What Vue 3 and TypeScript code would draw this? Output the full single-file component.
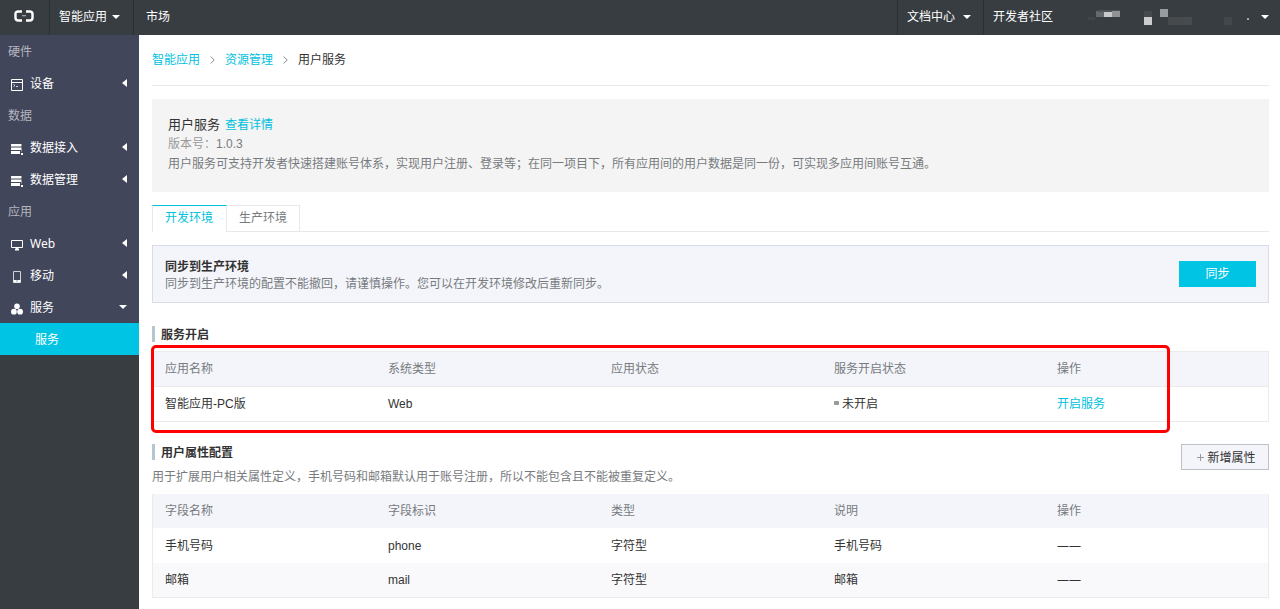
<script setup lang="ts">
interface NavRow {
  kind: 'group' | 'item'
  label: string
  icon?: 'device' | 'data' | 'web' | 'mobile' | 'service'
  open?: boolean
}

const nav: NavRow[] = [
  { kind: 'group', label: '硬件' },
  { kind: 'item', label: '设备', icon: 'device' },
  { kind: 'group', label: '数据' },
  { kind: 'item', label: '数据接入', icon: 'data' },
  { kind: 'item', label: '数据管理', icon: 'data' },
  { kind: 'group', label: '应用' },
  { kind: 'item', label: 'Web', icon: 'web' },
  { kind: 'item', label: '移动', icon: 'mobile' },
  { kind: 'item', label: '服务', icon: 'service', open: true },
]

const serviceHeads: string[] = ['应用名称', '系统类型', '应用状态', '服务开启状态', '操作']
const fieldHeads: string[] = ['字段名称', '字段标识', '类型', '说明', '操作']
const fields: string[][] = [
  ['手机号码', 'phone', '字符型', '手机号码', '——'],
  ['邮箱', 'mail', '字符型', '邮箱', '——'],
]
</script>

<template>
  <div class="app">
    <header class="topbar">
      <a href="#" class="logo" aria-label="Home">
        <svg width="20" height="12" viewBox="0 0 20 12" fill="none">
          <path d="M8 1.5H4.5Q1.5 1.5 1.5 4v4Q1.5 10.5 4.5 10.5H8M12 1.5h3.5Q18.5 1.5 18.5 4v4Q18.5 10.5 15.5 10.5H12" stroke="#fff" stroke-width="2.4" />
          <path d="M8 5.7h4" stroke="#a9acae" stroke-width="1.2" />
        </svg>
      </a>
      <button type="button" class="top-item apps">智能应用<span class="caret" /></button>
      <a href="#" class="top-item market">市场</a>
      <div class="spacer" />
      <button type="button" class="top-item docs">文档中心<span class="caret" /></button>
      <a href="#" class="top-item community">开发者社区</a>
      <button type="button" class="account" aria-label="Account">
        <svg width="168" height="35" viewBox="0 0 168 35" shape-rendering="crispEdges">
          <rect x="0" y="17" width="7" height="3" fill="#3f4548" />
          <rect x="8" y="11" width="8" height="6" fill="#65696c" />
          <rect x="10" y="10" width="22" height="2" fill="#4f5457" />
          <rect x="16" y="12" width="8" height="5" fill="#c8caca" />
          <rect x="24" y="11" width="8" height="6" fill="#909395" />
          <rect x="56" y="11" width="8" height="6" fill="#444a4d" />
          <rect x="56" y="17" width="8" height="8" fill="#cccdce" />
          <rect x="72" y="9" width="8" height="8" fill="#999c9e" />
          <rect x="80" y="17" width="16" height="8" fill="#464a4d" />
          <rect x="96" y="17" width="8" height="8" fill="#484c4f" />
          <rect x="136" y="17" width="8" height="8" fill="#43484b" />
          <rect x="159" y="18" width="2" height="2" fill="#a4a7a8" />
        </svg>
        <span class="caret" />
      </button>
    </header>

    <div class="body">
      <aside class="sidebar">
        <nav class="nav">
          <template v-for="row in nav" :key="row.label">
            <div v-if="row.kind === 'group'" class="nav-group">{{ row.label }}</div>
            <button v-else type="button" class="nav-item">
              <svg v-if="row.icon === 'device'" class="icon" viewBox="0 0 12 12" fill="none" stroke="#fff">
                <path d="M.5.5h11v11H.5zM.5 3.5h11" />
                <path d="M2.5 5.5l1.5 1-1.500 1M5 7.500h2" stroke="#d4d5da" />
              </svg>
              <svg v-else-if="row.icon === 'data'" class="icon" viewBox="0 0 12 12" fill="#fff">
                <path d="M0 1h10v2.500H0zM0 4.500h10v2.500H0zM0 8h9v3H0z" />
                <path d="M10 1h1v2.500h-1zM10 4.500h1v4h-1z" fill="#9a9ca8" />
                <path d="M10 10h2v2h-2z" />
              </svg>
              <svg v-else-if="row.icon === 'web'" class="icon" viewBox="0 0 12 12" fill="none" stroke="#fff">
                <path d="M.5 1.500h11v7H.5z" />
                <path d="M6 9v1.500M4 10.500h4" stroke-width="2" />
              </svg>
              <svg v-else-if="row.icon === 'mobile'" class="icon" viewBox="0 0 12 12">
                <path d="M2.500.5h7v11h-7z" fill="none" stroke="#d0d1d6" />
                <path d="M2.500 9h7v2.500h-7z" fill="#fff" />
                <path d="M5.500 9.500h1v1h-1z" fill="#42465a" />
              </svg>
              <svg v-else class="icon" viewBox="0 0 12 12" fill="#fff">
                <circle cx="6" cy="3.300" r="2.800" />
                <circle cx="2.900" cy="8.700" r="2.900" />
                <circle cx="9.100" cy="8.700" r="2.900" />
              </svg>
              <span class="nav-label">{{ row.label }}</span>
              <span :class="row.open ? 'caret' : 'caret-left'" />
            </button>
          </template>
          <a href="#" class="nav-sub">服务</a>
        </nav>
      </aside>

      <main class="main">
        <nav class="crumbs">
          <a href="#">智能应用</a>
          <svg width="5" height="8" viewBox="0 0 5 8"><path d="M.7.500L4.200 4 .7 7.500" fill="none" stroke="#888" /></svg>
          <a href="#">资源管理</a>
          <svg width="5" height="8" viewBox="0 0 5 8"><path d="M.7.500L4.200 4 .7 7.500" fill="none" stroke="#888" /></svg>
          <span>用户服务</span>
        </nav>

        <section class="intro">
          <div class="intro-title"><h1>用户服务</h1><a href="#">查看详情</a></div>
          <p><span class="muted">版本号：</span>1.0.3</p>
          <p>用户服务可支持开发者快速搭建账号体系，实现用户注册、登录等；在同一项目下，所有应用间的用户数据是同一份，可实现多应用间账号互通。</p>
        </section>

        <div class="tabs" role="tablist">
          <button type="button" role="tab" class="tab active" aria-selected="true">开发环境</button>
          <button type="button" role="tab" class="tab" aria-selected="false">生产环境</button>
        </div>

        <section class="sync">
          <div class="sync-text">
            <h2>同步到生产环境</h2>
            <p>同步到生产环境的配置不能撤回，请谨慎操作。您可以在开发环境修改后重新同步。</p>
          </div>
          <button type="button" class="primary">同步</button>
        </section>

        <section class="services">
          <h2 class="heading">服务开启</h2>
          <div class="marked">
            <table class="grid lined">
              <thead>
                <tr><th v-for="h in serviceHeads" :key="h" scope="col">{{ h }}</th></tr>
              </thead>
              <tbody>
                <tr>
                  <td>智能应用-PC版</td>
                  <td>Web</td>
                  <td></td>
                  <td><span class="dot" />未开启</td>
                  <td><a href="#">开启服务</a></td>
                </tr>
              </tbody>
            </table>
            <div class="highlight" />
          </div>
        </section>

        <section class="attributes">
          <div class="attr-head">
            <div>
              <h2 class="heading">用户属性配置</h2>
              <p>用于扩展用户相关属性定义，手机号码和邮箱默认用于账号注册，所以不能包含且不能被重复定义。</p>
            </div>
            <button type="button" class="add">
              <svg width="7" height="7" viewBox="0 0 7 7"><path d="M3.500 0v7M0 3.500h7" stroke="#999" /></svg>新增属性
            </button>
          </div>
          <table class="grid striped">
            <thead>
              <tr><th v-for="h in fieldHeads" :key="h" scope="col">{{ h }}</th></tr>
            </thead>
            <tbody>
              <tr v-for="row in fields" :key="row[1]">
                <td v-for="(cell, i) in row" :key="i" :class="{ none: i === 4 }">{{ cell }}</td>
              </tr>
            </tbody>
          </table>
        </section>
      </main>
    </div>
  </div>
</template>

<style>
body {
  background: #fff;
}
</style>

<style scoped>
.app {
  display: flex;
  flex-direction: column;
  min-height: 100vh;
  font: 12px/18px "Liberation Sans", "Noto Sans CJK SC", sans-serif;
  color: #333;
}
.app *,
.app {
  box-sizing: border-box;
}
h1, h2, p {
  margin: 0;
}
a {
  color: #00c1de;
  text-decoration: none;
}
button {
  font: inherit;
  border: 0;
  border-radius: 0;
  padding: 0;
  margin: 0;
  background: none;
  cursor: pointer;
}
.caret {
  border: 4px solid transparent;
  border-top-color: #fff;
  border-bottom: 0;
}
.caret-left {
  border: 4px solid transparent;
  border-right: 5px solid #fff;
  border-left: 0;
}

.topbar {
  display: flex;
  height: 35px;
  background: #373d41;
}
.logo {
  display: flex;
  align-items: center;
  width: 50px;
  padding: 0 0 3px 14px;
  border-right: 1px solid #2a2f32;
}
.top-item {
  display: flex;
  align-items: center;
  padding: 0 13px 2px 9px;
  color: #fff;
}
.apps {
  gap: 5px;
  border-right: 1px solid #2a2f32;
}
.market {
  padding-left: 12px;
}
.spacer {
  flex: 1;
}
.docs {
  gap: 8px;
  padding-right: 12px;
  border-left: 1px solid #2a2f32;
  border-right: 1px solid #2a2f32;
}
.community {
  padding-right: 35px;
}
.account {
  display: flex;
  align-items: center;
  gap: 5px;
  padding-right: 11px;
}
.account .caret {
  margin-bottom: 2px;
}

.body {
  display: flex;
  flex: 1;
}
.sidebar {
  flex: 0 0 139px;
  background: #373d41;
}
.nav {
  display: flex;
  flex-direction: column;
  background: #42465a;
}
.nav-group,
.nav-item,
.nav-sub {
  display: flex;
  align-items: center;
  height: 32px;
  padding-top: 2px;
  font-family: "Noto Sans", "Noto Sans CJK SC", sans-serif;
  color: #fff;
}
.nav-group {
  padding-left: 8px;
  color: #b4b6bf;
}
.nav-item {
  gap: 7px;
  padding-left: 11px;
  padding-right: 12px;
}
.nav-item .caret,
.nav-item .caret-left {
  margin-bottom: 2px;
}
.nav-label {
  flex: 1;
  text-align: left;
}
.icon {
  width: 12px;
  height: 12px;
  margin-top: 2px;
}
.nav-sub {
  padding-left: 35px;
  background: #00c4e4;
}

.main {
  flex: 1;
  min-width: 0;
  padding: 0 11px 11px 13px;
}
.crumbs {
  display: flex;
  align-items: center;
  gap: 10px;
  height: 51px;
  border-bottom: 1px solid #ebebeb;
}
.intro {
  margin-top: 13px;
  padding: 17px 16px 18px;
  background: #f4f4f4;
  color: #777b7e;
}
.intro-title {
  display: flex;
  align-items: center;
  gap: 5px;
}
.intro h1 {
  font-size: 13px;
  font-weight: 400;
  color: #333;
}
.intro p {
  line-height: 20px;
}
.muted {
  color: #999;
}

.tabs {
  display: flex;
  height: 27px;
  margin-top: 13px;
  border-bottom: 1px solid #e8e8e8;
}
.tab {
  height: 26px;
  padding: 0 12px 2px;
  border: 1px solid #e8e8e8;
  border-width: 1px 1px 0 0;
  color: #777b7e;
}
.tab.active {
  height: 27px;
  padding-right: 13px;
  padding-bottom: 3px;
  border-top-color: #00c1de;
  border-left-width: 1px;
  background: #fff;
  color: #00c1de;
}

.sync {
  display: flex;
  align-items: center;
  justify-content: space-between;
  height: 58px;
  margin-top: 13px;
  padding: 0 12px;
  border: 1px solid #d9dce6;
  background: #f4f5fa;
  color: #777b7e;
}
.sync-text {
  padding-top: 3px;
}
h2 {
  font-size: 12px;
  font-weight: 700;
  line-height: 16px;
  color: #333;
}
.primary {
  width: 77px;
  height: 26px;
  background: #00c4e4;
  color: #fff;
}

.services {
  margin-top: 23px;
}
.heading {
  height: 16px;
  padding-left: 6px;
  border-left: 3px solid #b4c6d0;
  line-height: 18px;
}
.marked {
  position: relative;
  margin-top: 9px;
}
.highlight {
  position: absolute;
  inset: -6px 99px -11px -1px;
  border: 3px solid #f00;
  border-radius: 5px;
  pointer-events: none;
}
.grid {
  width: 100%;
  table-layout: fixed;
  border-collapse: separate;
  border-spacing: 0;
  border: 1px solid #ebebeb;
}
.grid th,
.grid td {
  height: 35px;
  padding: 0 12px;
  text-align: left;
  font-weight: 400;
}
.grid th {
  background: #f4f5fa;
  color: #777b7e;
}
.lined {
  border-bottom: 0;
}
.lined th,
.lined td {
  border-bottom: 1px solid #ebebeb;
}
.dot {
  display: inline-block;
  width: 5px;
  height: 4px;
  margin-right: 3px;
  border-radius: 1px;
  background: #999;
  vertical-align: 3px;
}

.attributes {
  margin-top: 22px;
}
.attr-head {
  display: flex;
  align-items: flex-start;
  justify-content: space-between;
  height: 50px;
  color: #777b7e;
}
.attr-head p {
  margin-top: 8px;
}
.add {
  display: flex;
  align-items: center;
  justify-content: center;
  gap: 3px;
  width: 88px;
  height: 26px;
  padding-top: 2px;
  padding-left: 3px;
  border: 1px solid #bfc1c6;
  background: #f4f5fa;
  color: #333;
}
.add svg {
  margin-bottom: 2px;
}
.striped {
  border-top: 0;
}
.striped th,
.striped tr:nth-child(even) td {
  height: 34px;
}
.striped tr:nth-child(even) td {
  background: #f9f9fb;
}
.grid .none {
  font-family: "Open Sans", "Noto Sans", sans-serif;
}
</style>
